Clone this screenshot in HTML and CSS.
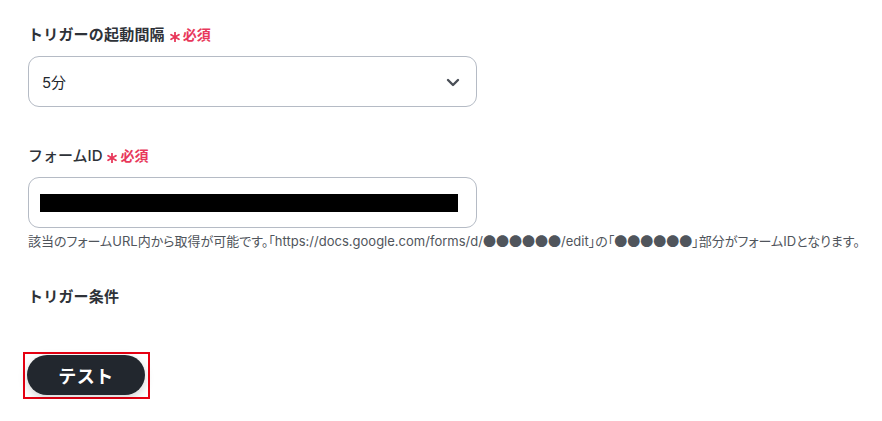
FILE: index.html
```html
<!DOCTYPE html>
<html lang="ja">
<head>
<meta charset="utf-8">
<link rel="stylesheet" href="styles.css">
</head>
<body>
<div class="page">
  <div class="field">
    <div class="label">トリガーの起動間隔<span class="req"><svg class="ast" width="10" height="10" viewBox="0 0 10 10"><path d="M5 0.5 V9.5 M1.1 2.75 L8.9 7.25 M1.1 7.25 L8.9 2.75" stroke="#e8385b" stroke-width="1.8" stroke-linecap="round"/></svg>必須</span></div>
    <div class="box select">
      <span class="value">5分</span>
      <svg class="chev" width="14" height="14" viewBox="0 0 14 14"><path d="M2 5 L7 10 L12 5" fill="none" stroke="#4a4f57" stroke-width="2.4" stroke-linecap="round" stroke-linejoin="round"/></svg>
    </div>
  </div>
  <div class="field f2">
    <div class="label light">フォームID<span class="req"><svg class="ast" width="10" height="10" viewBox="0 0 10 10"><path d="M5 0.5 V9.5 M1.1 2.75 L8.9 7.25 M1.1 7.25 L8.9 2.75" stroke="#e8385b" stroke-width="1.8" stroke-linecap="round"/></svg>必須</span></div>
    <div class="box input"><span class="mask"></span></div>
    <div class="help">該当のフォームURL内から取得が可能です。「https://docs.google.com/forms/d/<span class="dots">●●●●●●</span>/edit」の「<span class="dots">●●●●●●</span>」部分がフォームIDとなります。</div>
  </div>
  <div class="section">トリガー条件</div>
  <div class="btnwrap"><button class="btn">テスト</button></div>
</div>
</body>
</html>
```
FILE: styles.css
```css
html, body { margin: 0; padding: 0; background: #fff; }
body { font-family: "Inter", "Noto Sans CJK JP", sans-serif; color: #2e3238; }
.page { padding: 24px 0 0 28px; }
.label { font-size: 15px; font-weight: 700; line-height: 22px; display: flex; align-items: center; color: #2e3238; letter-spacing: 0.2px; }
.label.light { font-weight: 500; letter-spacing: 0; }
.req { color: #e8385b; font-size: 14px; font-weight: 700; margin-left: 5px; display: inline-flex; align-items: center; letter-spacing: 0; }
.ast { display: block; margin-right: 3px; position: relative; top: 2px; }
.box { width: 447px; height: 49px; border: 1px solid #b5bbc5; border-radius: 11px; margin-top: 10px; display: flex; align-items: center; }
.select { justify-content: space-between; padding: 0 16px 0 13px; width: 418px; }
.value { font-size: 15px; color: #23272d; }
.chev { display: block; }
.f2 { margin-top: 38px; }
.input { padding: 0 0 0 11px; width: 436px; }
.mask { display: block; width: 418px; height: 18px; background: #000; }
.help { font-size: 13px; color: #50555c; margin-top: 4px; line-height: 17px; white-space: nowrap; font-feature-settings: "palt"; letter-spacing: 0.01px; }
.dots { font-family: "Noto Sans CJK JP", sans-serif; font-feature-settings: normal; color: #50555c; }
.section { font-size: 15px; font-weight: 700; margin-top: 36px; line-height: 22px; letter-spacing: 0.2px; }
.btnwrap { margin-top: 44px; margin-left: -5px; width: 123px; height: 43px; border: 2px solid #e60012; display: flex; align-items: center; }
.btn { width: 118px; height: 40px; border: none; border-radius: 20px; background: #22272e; color: #fff; font-family: "Inter", "Noto Sans CJK JP", sans-serif; font-size: 18px; font-weight: 700; box-shadow: 0 3px 10px rgba(0,0,0,0.18); margin: 0 0 1px 2px; padding: 0; letter-spacing: 0.5px; }
```
